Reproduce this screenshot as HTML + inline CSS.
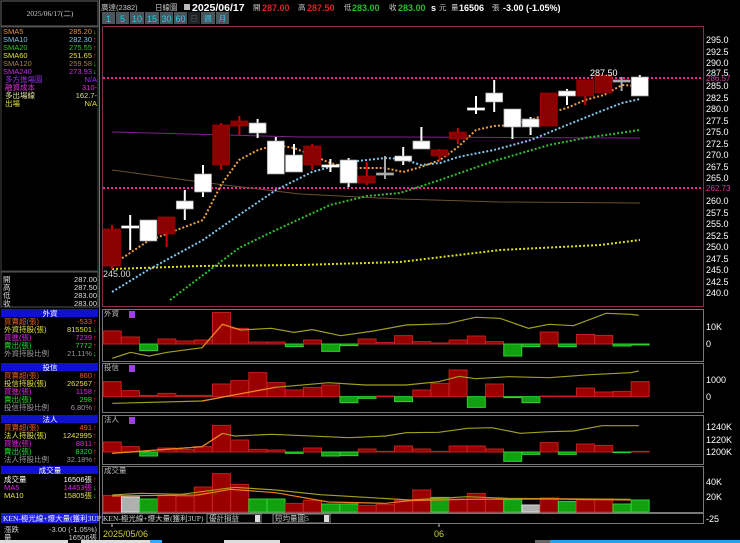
<!DOCTYPE html>
<html><head><meta charset="utf-8"><style>
html,body{margin:0;padding:0;background:#000;width:740px;height:543px;overflow:hidden}
svg{display:block}
text{font-family:"Liberation Sans","Noto Sans CJK TC",sans-serif}
.c{font-family:"Liberation Serif","Noto Sans CJK TC",serif;font-size:7.5px}
.ax{font-size:9px;fill:#fff}
</style></head><body>
<svg id="s" width="740" height="543" viewBox="0 0 740 543" xmlns="http://www.w3.org/2000/svg">
<rect width="740" height="543" fill="#000"/>
<rect x="1" y="1" width="97" height="25" fill="none" stroke="#666" stroke-width="1"/>
<rect x="1" y="27" width="97" height="244" fill="none" stroke="#444" stroke-width="1"/>
<line x1="99.5" y1="0" x2="99.5" y2="543" stroke="#777"/>
<text x="50" y="16" class="c" fill="#ccc" text-anchor="middle">2025/06/17(二)</text>
<g class="c">
<text x="3" y="34" fill="#e09040">SMA5</text><text x="92" y="34" fill="#e09040" text-anchor="end">285.20</text><text x="93" y="34" fill="#2c2">↓</text>
<text x="3" y="42" fill="#80c0e0">SMA10</text><text x="92" y="42" fill="#80c0e0" text-anchor="end">282.30</text><text x="93" y="42" fill="#e22">↑</text>
<text x="3" y="50" fill="#30c030">SMA20</text><text x="92" y="50" fill="#30c030" text-anchor="end">275.55</text><text x="93" y="50" fill="#e22">↑</text>
<text x="3" y="58" fill="#e0e040">SMA60</text><text x="92" y="58" fill="#e0e040" text-anchor="end">251.65</text><text x="93" y="58" fill="#e22">↑</text>
<text x="3" y="66" fill="#a08050">SMA120</text><text x="92" y="66" fill="#a08050" text-anchor="end">259.58</text><text x="93" y="66" fill="#2c2">↓</text>
<text x="3" y="74" fill="#c030e0">SMA240</text><text x="92" y="74" fill="#c030e0" text-anchor="end">273.93</text><text x="93" y="74" fill="#2c2">↓</text>
<text x="5" y="82" fill="#9030e0">多方進場圖</text><text x="97" y="82" fill="#9030e0" text-anchor="end">N/A</text>
<text x="5" y="90" fill="#e030e0">融資成本</text><text x="97" y="90" fill="#e030e0" text-anchor="end">310-</text>
<text x="5" y="98" fill="#e0e0a0">多出場線</text><text x="97" y="98" fill="#e0e0a0" text-anchor="end">162.7-</text>
<text x="5" y="106" fill="#e0e040">出場</text><text x="97" y="106" fill="#e0e040" text-anchor="end">N/A</text>
</g>
<rect x="1" y="272" width="97" height="35" fill="none" stroke="#555"/>
<g class="c" fill="#ddd">
<text x="3" y="282">開</text><text x="97" y="282" text-anchor="end">287.00</text>
<text x="3" y="290">高</text><text x="97" y="290" text-anchor="end">287.50</text>
<text x="3" y="298">低</text><text x="97" y="298" text-anchor="end">283.00</text>
<text x="3" y="306">收</text><text x="97" y="306" text-anchor="end">283.00</text>
</g>
<rect x="1" y="309" width="97" height="8" fill="#1010d0"/>
<text x="50" y="316" class="c" fill="#fff" text-anchor="middle">外資</text>
<g class="c">
<text x="4" y="324" fill="#e06020">買賣超(張)</text><text x="92" y="324" fill="#e06020" text-anchor="end">-533</text><text x="93" y="324" fill="#e22">↑</text>
<text x="4" y="332" fill="#e0e040">外資持股(張)</text><text x="92" y="332" fill="#e0e040" text-anchor="end">815501</text><text x="93" y="332" fill="#2c2">↓</text>
<text x="4" y="340" fill="#e020e0">買進(張)</text><text x="92" y="340" fill="#e020e0" text-anchor="end">7239</text><text x="93" y="340" fill="#e22">↑</text>
<text x="4" y="348" fill="#20e020">賣出(張)</text><text x="92" y="348" fill="#20e020" text-anchor="end">7772</text><text x="93" y="348" fill="#e22">↑</text>
<text x="4" y="356" fill="#999">外資持股比例</text><text x="92" y="356" fill="#999" text-anchor="end">21.11%</text><text x="93" y="356" fill="#2c2">↓</text>
</g>
<rect x="1" y="363" width="97" height="8" fill="#1010d0"/>
<text x="50" y="370" class="c" fill="#fff" text-anchor="middle">投信</text>
<g class="c">
<text x="4" y="378" fill="#e06020">買賣超(張)</text><text x="92" y="378" fill="#e06020" text-anchor="end">860</text><text x="93" y="378" fill="#e22">↑</text>
<text x="4" y="386" fill="#e0e040">投信持股(張)</text><text x="92" y="386" fill="#e0e040" text-anchor="end">262567</text><text x="93" y="386" fill="#e22">↑</text>
<text x="4" y="394" fill="#e020e0">買進(張)</text><text x="92" y="394" fill="#e020e0" text-anchor="end">1158</text><text x="93" y="394" fill="#e22">↑</text>
<text x="4" y="402" fill="#20e020">賣出(張)</text><text x="92" y="402" fill="#20e020" text-anchor="end">298</text><text x="93" y="402" fill="#e22">↑</text>
<text x="4" y="410" fill="#999">投信持股比例</text><text x="92" y="410" fill="#999" text-anchor="end">6.80%</text><text x="93" y="410" fill="#e22">↑</text>
</g>
<rect x="1" y="415" width="97" height="8" fill="#1010d0"/>
<text x="50" y="422" class="c" fill="#fff" text-anchor="middle">法人</text>
<g class="c">
<text x="4" y="430" fill="#e06020">買賣超(張)</text><text x="92" y="430" fill="#e06020" text-anchor="end">491</text><text x="93" y="430" fill="#e22">↑</text>
<text x="4" y="438" fill="#e0e040">法人持股(張)</text><text x="92" y="438" fill="#e0e040" text-anchor="end">1242995</text><text x="93" y="438" fill="#e22">↑</text>
<text x="4" y="446" fill="#e020e0">買進(張)</text><text x="92" y="446" fill="#e020e0" text-anchor="end">8811</text><text x="93" y="446" fill="#e22">↑</text>
<text x="4" y="454" fill="#20e020">賣出(張)</text><text x="92" y="454" fill="#20e020" text-anchor="end">8320</text><text x="93" y="454" fill="#e22">↑</text>
<text x="4" y="462" fill="#999">法人持股比例</text><text x="92" y="462" fill="#999" text-anchor="end">32.18%</text><text x="93" y="462" fill="#e22">↑</text>
</g>
<rect x="1" y="466" width="97" height="8" fill="#1010d0"/>
<text x="50" y="473" class="c" fill="#fff" text-anchor="middle">成交量</text>
<g class="c">
<text x="4" y="482" fill="#fff">成交量</text><text x="92" y="482" fill="#fff" text-anchor="end">16506張</text><text x="93" y="482" fill="#e22">↑</text>
<text x="4" y="490" fill="#e020e0">MA5</text><text x="92" y="490" fill="#e020e0" text-anchor="end">14453張</text><text x="93" y="490" fill="#2c2">↓</text>
<text x="4" y="498" fill="#e0e040">MA10</text><text x="92" y="498" fill="#e0e040" text-anchor="end">15805張</text><text x="93" y="498" fill="#2c2">↓</text>
</g>
<rect x="1" y="513" width="97" height="10" fill="#1a1ae0"/>
<text x="3" y="521" class="c" fill="#eef">KEN-極光線+爆大量(獲利3UP)</text>
<g class="c" fill="#ccc">
<text x="4" y="532">漲跌</text><text x="97" y="532" text-anchor="end">-3.00 (-1.05%)</text>
<text x="4" y="540">量</text><text x="97" y="540" text-anchor="end">16506張</text>
</g>

<g class="c" fill="#ccc">
<text x="101" y="10">廣達(2382)</text>
<text x="155" y="10">日線圖</text>
</g>
<rect x="184" y="4" width="6" height="6" fill="#bbb"/>
<text x="192" y="11" font-size="10.5" font-weight="bold" fill="#fff">2025/06/17</text>
<text x="253" y="10" class="c" fill="#ccc">開</text><text x="262" y="11" font-size="9" font-weight="bold" fill="#e02020">287.00</text>
<text x="298" y="10" class="c" fill="#ccc">高</text><text x="307" y="11" font-size="9" font-weight="bold" fill="#e02020">287.50</text>
<text x="344" y="10" class="c" fill="#ccc">低</text><text x="352" y="11" font-size="9" font-weight="bold" fill="#20c020">283.00</text>
<text x="389" y="10" class="c" fill="#ccc">收</text><text x="398" y="11" font-size="9" font-weight="bold" fill="#20c020">283.00</text>
<text x="431" y="11" font-size="9" font-weight="bold" fill="#fff">s</text><text x="439" y="10" class="c" fill="#ccc">元</text>
<text x="451" y="10" class="c" fill="#ccc">量</text><text x="459" y="11" font-size="9" font-weight="bold" fill="#fff">16506</text>
<text x="492" y="10" class="c" fill="#ccc">張</text>
<text x="503" y="11" font-size="9" font-weight="bold" fill="#fff">-3.00 (-1.05%)</text>
<g font-size="9" fill="#30c8e8" text-anchor="middle">
<rect x="102" y="12" width="13" height="12" fill="#4a555c"/><text x="108.5" y="22">1</text>
<rect x="116" y="12" width="13" height="12" fill="#4a555c"/><text x="122.5" y="22">5</text>
<rect x="130" y="12" width="14" height="12" fill="#4a555c"/><text x="137" y="22">10</text>
<rect x="145" y="12" width="14" height="12" fill="#4a555c"/><text x="152" y="22">15</text>
<rect x="160" y="12" width="13" height="12" fill="#4a555c"/><text x="166.5" y="22">30</text>
<rect x="174" y="12" width="13" height="12" fill="#4a555c"/><text x="180.5" y="22">60</text>
<rect x="188" y="12" width="12" height="12" fill="#1e2224"/><text x="194" y="21" class="c" fill="#555">日</text>
<rect x="201" y="12" width="14" height="12" fill="#4a555c"/><text x="208" y="21" class="c" fill="#30c8e8">週</text>
<rect x="216" y="12" width="13" height="12" fill="#4a555c"/><text x="222.5" y="21" class="c" fill="#30c8e8">月</text>
</g>

<rect x="102.5" y="26.5" width="601" height="280" fill="none" stroke="#803050"/>
<g class="ax">
<text x="706" y="43">295.0</text><text x="706" y="55">292.5</text><text x="706" y="66">290.0</text>
<text x="706" y="89">285.0</text><text x="706" y="101">282.5</text><text x="706" y="112">280.0</text>
<text x="706" y="124">277.5</text><text x="706" y="135">275.0</text><text x="706" y="147">272.5</text>
<text x="706" y="158">270.0</text><text x="706" y="170">267.5</text><text x="706" y="181">265.0</text>
<text x="706" y="204">260.0</text><text x="706" y="216">257.5</text><text x="706" y="227">255.0</text>
<text x="706" y="239">252.5</text><text x="706" y="250">250.0</text><text x="706" y="262">247.5</text>
<text x="706" y="273">245.0</text><text x="706" y="285">242.5</text><text x="706" y="296">240.0</text>
<text x="706" y="76">287.5</text>
</g>
<text x="706" y="81" font-size="8" fill="#e030a0">286.57</text>
<text x="706" y="191" font-size="8" fill="#e030a0">262.73</text>
<line x1="103" y1="78" x2="703" y2="78" stroke="#ff20a0" stroke-width="2" stroke-dasharray="2 2"/>
<line x1="103" y1="188" x2="703" y2="188" stroke="#ff20a0" stroke-width="2" stroke-dasharray="2 2"/>
<g id="mas" fill="none"></g>
<g id="candles"></g>
<text x="590" y="76" font-size="9" fill="#fff">287.50</text>
<text x="103" y="277" font-size="9" fill="#ddd">245.00</text>

<rect x="102.5" y="309.5" width="601" height="52" fill="none" stroke="#777"/>
<rect x="102.5" y="363.5" width="601" height="49" fill="none" stroke="#777"/>
<rect x="102.5" y="415.5" width="601" height="49" fill="none" stroke="#777"/>
<rect x="102.5" y="466.5" width="601" height="46" fill="none" stroke="#777"/>
<g class="c" fill="#bbb">
<text x="104" y="316">外資</text><text x="104" y="370">投信</text><text x="104" y="422">法人</text><text x="104" y="473">成交量</text>
</g>
<rect x="129" y="311" width="6" height="7" fill="#a040e0"/><rect x="129" y="365" width="6" height="7" fill="#a040e0"/><rect x="129" y="417" width="6" height="7" fill="#a040e0"/>
<g class="ax">
<text x="706" y="330">10K</text><text x="706" y="347">0</text>
<text x="706" y="383">1000</text><text x="706" y="400">0</text>
<text x="706" y="430">1240K</text><text x="706" y="443">1220K</text><text x="706" y="455">1200K</text>
<text x="706" y="485">40K</text><text x="706" y="500">20K</text>
<text x="706" y="522">-25</text>
</g>
<g id="bars"></g>
<rect x="102.5" y="513.5" width="601" height="10" fill="none" stroke="#777"/>
<text x="103" y="521" class="c" fill="#ccc">KEN-極光線+爆大量(獲利3UP)</text>
<rect x="207" y="514" width="54" height="9" fill="#000" stroke="#888"/><text x="209" y="521" class="c" fill="#ccc">優計損益</text><rect x="255" y="515" width="5" height="7" fill="#ddd"/>
<rect x="273" y="514" width="57" height="9" fill="#000" stroke="#888"/><text x="275" y="521" class="c" fill="#ccc">短均量圖5</text><rect x="324" y="515" width="5" height="7" fill="#ddd"/>
<line x1="112" y1="524" x2="112" y2="527" stroke="#ccc"/><line x1="439" y1="524" x2="439" y2="527" stroke="#ccc"/>
<text x="103" y="537" font-size="9" fill="#d0d040">2025/05/06</text>
<text x="434" y="537" font-size="9" fill="#d0d040">06</text>
<rect x="0" y="540" width="68" height="3" fill="#ddd"/>
<rect x="81" y="540" width="80" height="3" fill="#ddd"/><rect x="150" y="540" width="12" height="3" fill="#3af"/>
<rect x="224" y="540" width="56" height="3" fill="#ddd"/>
<rect x="535" y="540" width="15" height="3" fill="#666"/><rect x="550" y="540" width="190" height="3" fill="#2aa0e0"/>
</svg>
<script>
var NS="http://www.w3.org/2000/svg";
function el(p,t,a){var e=document.createElementNS(NS,t);for(var k in a)e.setAttribute(k,a[k]);p.appendChild(e);return e;}
var C=[[229,266,225,269,'r'],[226,228,215,250,'c'],[220,241,220,241,'w'],[217,234,217,247,'r'],[201,209,190,220,'w'],[174,192,165,197,'w'],[125,165,123,170,'r'],[121,126,116,135,'r'],[123,133,119,138,'w'],[141,174,137,174,'w'],[155,172,144,172,'w'],[146,165,144,170,'r'],[165,167,159,172,'c'],[160,183,158,187,'w'],[176,183,162,185,'r'],[173,175,156,179,'g'],[156,161,147,165,'w'],[141,149,127,149,'w'],[150,156,149,161,'r'],[132,139,128,144,'r'],[108,110,96,114,'c'],[93,102,80,112,'w'],[109,127,109,139,'w'],[119,127,117,135,'w'],[93,126,93,126,'r'],[91,96,89,105,'w'],[80,96,80,105,'r'],[75,93,75,93,'r'],[80,82,77,91,'g'],[77,96,75,96,'w']];
var cg=document.getElementById('candles');
C.forEach(function(c,i){var x=112+i*18.2;var t=c[4];
 var col=t=='r'?'#8b0000':(t=='g'?'#aaa':'#fff');var wc=t=='r'?'#d00000':col;
 el(cg,'line',{x1:x,x2:x,y1:c[2],y2:c[3],stroke:wc,'stroke-width':2});
 var h=Math.max(c[1]-c[0],2);
 el(cg,'rect',{x:x-8.5,y:c[0],width:17,height:h,fill:col,stroke:t=='w'?'#999':(t=='r'?'#a00':col),'stroke-width':0.7});
});
var mg=document.getElementById('mas');
function pl(pts,col,w,d){el(mg,'polyline',{points:pts,stroke:col,'stroke-width':w,'stroke-dasharray':d||'none',fill:'none'});}
pl("112,132 300,137 400,137 640,138","#802090",1);
pl("112,170 200,182 300,194 400,199 500,202 640,203","#6a5030",1);
pl("112,269 200,266 300,265 400,262 500,250 600,245 640,240","#e0e020",2,"2 2");
pl("170,300 239,248 276,230 330,205 367,196 400,193 440,180 494,161 549,145 585,138 640,130","#30c030",2,"2 2");
pl("112,292 148,270 203,240 239,215 276,190 312,172 349,162 385,158 403,159 421,165 440,163 458,157 494,150 531,140 567,125 604,110 622,103 640,99","#80c8f0",2,"2 2");
pl("112,265 148,241 203,220 221,185 239,160 258,150 276,145 294,148 312,155 330,163 349,168 367,168 385,168 403,172 421,167 440,160 458,147 476,130 494,126 512,125 531,120 549,113 567,108 585,100 604,95 622,85 640,86","#f0a040",2,"2 2");
var bg=document.getElementById('bars');
var g=el(bg,'g',{transform:'translate(100 300) scale(0.40816 0.33333)'});
function bars(zero,arr){arr.forEach(function(v,i){var x=8+i*44.6;var top=Math.min(v,zero),h=Math.abs(v-zero);
 var red=v<zero; var col=red?'#9a0000':'#10a010';
 el(g,'rect',{x:x,y:top,width:44,height:Math.max(h,2),fill:col,stroke:red?'#c02020':'#30d030','stroke-width':1,'vector-effect':'non-scaling-stroke'});});}
function vbars(bot,arr,greens,gray){arr.forEach(function(v,i){var x=8+i*44.6;var col=greens.indexOf(i)>=0?'#10a010':'#9a0000';
 if(gray.indexOf(i)>=0)col='#b0b0b0';
 el(g,'rect',{x:x,y:v,width:44,height:bot-v,fill:col,stroke:col=='#9a0000'?'#c02020':(col=='#10a010'?'#30d030':'#ddd'),'stroke-width':1,'vector-effect':'non-scaling-stroke'});});}
function ln(pts,col){el(g,'polyline',{points:pts,stroke:col,fill:'none','stroke-width':1.2,'vector-effect':'non-scaling-stroke'});}
bars(132,[93,111,152,117,123,120,37,85,126,126,140,120,154,137,117,127,107,125,129,120,108,125,168,140,96,140,103,106,138,135]);
ln("30,175 75,157 120,168 165,157 250,143 300,73 345,90 420,85 475,97 520,89 590,107 670,93 750,75 850,71 920,52 980,55 1050,85 1100,73 1160,77 1240,40 1300,43 1320,46","#a0a020");
ln("250,143 300,73 345,90","#f08020");
bars(290,[245,272,286,280,286,286,252,242,218,248,270,262,255,308,295,288,305,270,250,210,322,252,293,308,288,288,264,276,274,245]);
ln("30,310 250,303 350,280 430,262 560,248 650,255 750,255 830,245 880,229 920,236 1000,230 1100,233 1200,224 1300,218 1320,213","#a0a020");
ln("250,303 350,280 430,262","#f08020");
bars(456,[426,440,468,444,448,440,376,420,448,450,460,444,468,467,447,454,438,447,454,438,438,447,484,463,428,463,432,436,458,454]);
ln("30,460 250,440 300,400 330,408 420,403 500,407 610,413 700,408 750,398 830,397 900,385 960,383 1030,400 1100,395 1160,393 1230,377 1320,377","#a0a020");
ln("30,460 250,440 300,400","#f08020");
vbars(636,[586,591,597,587,589,561,521,553,597,597,610,601,612,612,616,614,601,570,592,597,580,597,599,615,594,604,600,597,612,600],[2,8,9,12,13,18,22,25,28,29],[1,23]);
ln("30,585 100,580 200,583 330,562 430,570 540,584 650,592 760,600 900,590 1000,595 1300,598","#a0a020");
ln("30,588 240,585 320,568 430,578 560,606 700,610 760,602 900,598 1100,597 1300,600","#f08020");
</script>
</body></html>
